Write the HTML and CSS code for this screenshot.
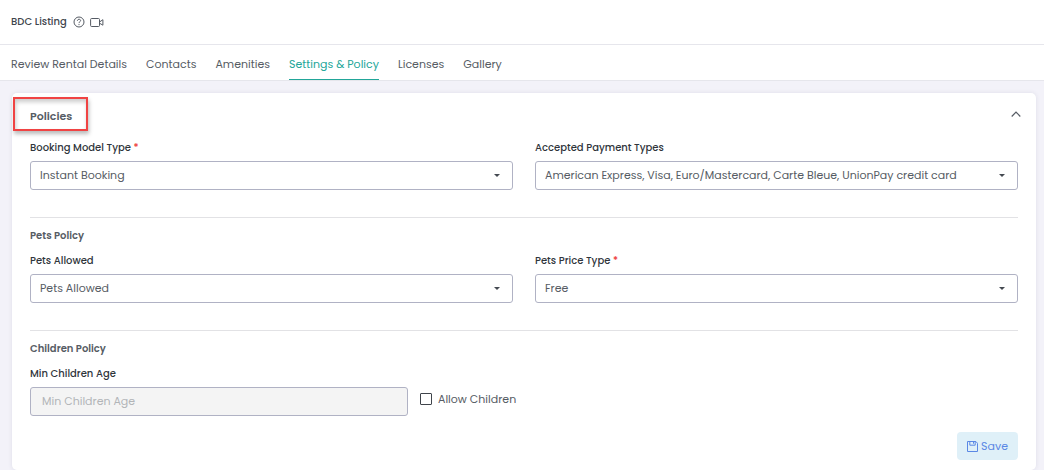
FILE: index.html
```html
<!DOCTYPE html>
<html lang="en">
<head>
<meta charset="utf-8">
<meta name="viewport" content="width=device-width, initial-scale=1">
<title>BDC Listing</title>
<link rel="stylesheet" href="styles.css">
</head>
<body>
<header class="page-header">
  <h1 class="page-title">BDC Listing</h1>
  <button class="icon-button" type="button" aria-label="Help">
    <svg width="12" height="12" viewBox="0 0 12 12" fill="none" stroke="currentColor"><circle cx="6" cy="6" r="5"/><path d="M4.4 4.8C4.4 2.7 7.7 2.8 7.6 4.7C7.5 5.8 6 5.7 6 7.1M6 8.1V9.1"/></svg>
  </button>
  <button class="icon-button" type="button" aria-label="Video">
    <svg width="14" height="12" viewBox="0 0 14 12" fill="none" stroke="currentColor"><rect x=".6" y="2.5" width="8.9" height="8" rx="1"/><path d="M9.5 6L12.9 3.7V9.2L9.5 7.2Z"/></svg>
  </button>
</header>
<nav class="tabs">
  <a class="tab" href="#details">Review Rental Details</a>
  <a class="tab" href="#contacts">Contacts</a>
  <a class="tab" href="#amenities">Amenities</a>
  <a class="tab tab-active" href="#settings" aria-current="page">Settings &amp; Policy</a>
  <a class="tab" href="#licenses">Licenses</a>
  <a class="tab" href="#gallery">Gallery</a>
</nav>
<main class="content">
  <form class="card">
    <div class="card-header">
      <h2 class="card-title">Policies</h2>
      <button class="icon-button" type="button" aria-label="Collapse">
        <svg width="10" height="8" viewBox="0 0 10 8" fill="none" stroke="currentColor" stroke-width="1.2"><path d="M.7 6.5L5 2L9.3 6.5"/></svg>
      </button>
    </div>
    <section class="row">
      <div class="field">
        <label class="label" for="model">Booking Model Type <span class="required">*</span></label>
        <select class="control select" id="model"><option>Instant Booking</option></select>
      </div>
      <div class="field">
        <label class="label" for="payment">Accepted Payment Types</label>
        <select class="control select" id="payment"><option>American Express, Visa, Euro/Mastercard, Carte Bleue, UnionPay credit card</option></select>
      </div>
    </section>
    <hr class="divider">
    <h3 class="section-title">Pets Policy</h3>
    <section class="row">
      <div class="field">
        <label class="label" for="pets">Pets Allowed</label>
        <select class="control select" id="pets"><option>Pets Allowed</option></select>
      </div>
      <div class="field">
        <label class="label" for="price">Pets Price Type <span class="required">*</span></label>
        <select class="control select" id="price"><option>Free</option></select>
      </div>
    </section>
    <hr class="divider">
    <h3 class="section-title">Children Policy</h3>
    <section class="children-row">
      <div class="field">
        <label class="label" for="age">Min Children Age</label>
        <input class="control" id="age" type="text" placeholder="Min Children Age" disabled>
      </div>
      <label class="check"><input class="check-box" type="checkbox">Allow Children</label>
    </section>
    <div class="actions">
      <button class="save" type="button">
        <svg width="11" height="11" viewBox="0 0 11 11" fill="none" stroke="currentColor"><path d="M.5 1V10.5H10.5V2.3L8.9.5H.5ZM2.8.5V4.2H8.2V.5M6.5 1V2.7"/></svg>
        Save
      </button>
    </div>
  </form>
</main>
</body>
</html>
```
FILE: styles.css
```css
* {
  box-sizing: border-box;
}

body {
  margin: 0;
  background: #f3f2f9;
  color: #565c64;
  font: 11px/16px Poppins, Inter, "Open Sans", sans-serif;
}

h1,
h2,
h3 {
  margin: 0;
  font-size: 10px;
  font-weight: 600;
}

button,
input,
select {
  font: inherit;
  color: inherit;
}

.page-header {
  display: flex;
  align-items: center;
  gap: 5px;
  height: 45px;
  padding: 0 11px;
  background: #fff;
  border-bottom: 1px solid #e6e6ec;
}

.page-title {
  margin-right: 1px;
  font-weight: 500;
  color: #41464d;
}

.icon-button {
  display: flex;
  padding: 0;
  border: 0;
  background: none;
  color: #555b64;
}

.tabs {
  display: flex;
  gap: 19px;
  height: 36px;
  padding: 0 11px;
  background: #fff;
  border-bottom: 1px solid #e6e6ec;
}

.tab {
  padding-top: 11px;
  border-bottom: 1px solid transparent;
  color: inherit;
  text-decoration: none;
  white-space: nowrap;
}

.tab-active {
  color: #22a699;
  border-bottom-color: #22a699;
}

.content {
  padding: 12px 8px 0 12px;
}

.card {
  padding: 0 18px 10px;
  background: #fff;
  border-radius: 5px;
  box-shadow: 0 0 4px #dddde8;
}

.card-header {
  display: flex;
  align-items: center;
  justify-content: space-between;
  padding-top: 4px;
  margin: 0 -3px 9px -17px;
}

.card-title {
  padding: 9px 14px 5px 15px;
  border: 2px solid #f04343;
  box-shadow: 1px 3px 4px #bbb, inset 1px 3px 4px #ccc;
  font-size: 11px;
  line-height: 16px;
}

.row {
  display: grid;
  grid-template-columns: 1fr 1fr;
  gap: 22px;
}

.field {
  display: flex;
  flex-direction: column;
  gap: 5px;
  min-width: 0;
}

.label {
  font-size: 10px;
  font-weight: 500;
  color: #30353b;
}

.required {
  color: #ee3b3b;
}

.control {
  width: 100%;
  height: 29px;
  padding: 0 11px;
  background: #fff;
  border: 1px solid #b0b2c4;
  border-radius: 3px;
}

.control:disabled {
  background: #f4f4f4;
}

.control::placeholder {
  color: #b2b5b8;
  opacity: 1;
}

.select {
  padding: 0 24px 1px 9px;
  appearance: none;
  background: #fff url("data:image/svg+xml,%3Csvg xmlns='http://www.w3.org/2000/svg' width='6' height='4'%3E%3Cpath d='M0 0H6L3 3Z' fill='%23444951'/%3E%3C/svg%3E") no-repeat right 12px center;
}

.divider {
  margin: 27px 0 10px;
  border: 0;
  border-top: 1px solid #e2e2e5;
}

.section-title {
  margin-bottom: 9px;
}

.children-row {
  display: grid;
  grid-template-columns: 378fr 610fr;
  align-items: end;
}

.check {
  display: flex;
  align-items: center;
  gap: 6px;
  margin: 0 0 9px 12px;
}

.check-box {
  width: 12px;
  height: 12px;
  margin: 0;
  appearance: none;
  background: #fff;
  border: 1px solid #3f444b;
  border-radius: 1px;
}

.check-box:checked {
  background: #22a699;
}

.actions {
  display: flex;
  justify-content: flex-end;
  margin-top: 16px;
}

.save {
  display: flex;
  align-items: center;
  gap: 3px;
  height: 28px;
  padding: 0 10px;
  background: #dff0f8;
  border: 0;
  border-radius: 4px;
  color: #5b88e5;
}
```
